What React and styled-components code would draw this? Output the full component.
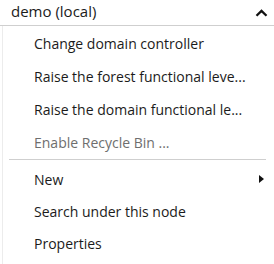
import React from "react";
import styled, { createGlobalStyle } from "styled-components";

const Global = createGlobalStyle`
  html, body { margin: 0; padding: 0; background: #fff; }
  body { font-family: "Open Sans", "Noto Sans", sans-serif; }
`;

const Page = styled.div`
  width: 274px;
  height: 264px;
  background: #fff;
  overflow: hidden;
`;

const Header = styled.div`
  height: 25px;
  border-bottom: 1px solid #cfcfcf;
  display: flex;
  align-items: center;
  justify-content: space-between;
  padding: 0 6px 0 11px;
  box-sizing: content-box;
`;

const Title = styled.span`
  font-size: 15px;
  color: #1b1b1b;
  line-height: 1;
  margin-top: -2px;
`;

const Menu = styled.div`
  margin-left: 2px;
  border-left: 1px solid #ececec;
  height: 238px;
  padding-top: 1px;
  box-sizing: border-box;
`;

const Group = styled.div`
  display: flex;
  flex-direction: column;
`;

const Item = styled.div`
  height: ${(p) => p.$h || 32}px;
  display: flex;
  align-items: center;
  justify-content: space-between;
  padding: 0 10px 0 31px;
  font-size: 14px;
  color: ${(p) => (p.$disabled ? "#6e6e6e" : "#1b1b1b")};
  white-space: nowrap;
`;

const Separator = styled.div`
  height: 1px;
  background: #cfcfcf;
  margin: 0 8px 3px 6px;
`;

const Caret = () => (
  <svg width="13" height="8" viewBox="0 0 13 8">
    <path d="M1.5 6.8 L6.5 1.9 L11.5 6.8" fill="none" stroke="#111" strokeWidth="2.3" />
  </svg>
);

const Arrow = () => (
  <svg width="5" height="8" viewBox="0 0 5 8">
    <path d="M0 0 L5 4 L0 8 Z" fill="#111" />
  </svg>
);

export default function App() {
  return (
    <Page>
      <Global />
      <Header>
        <Title>demo (local)</Title>
        <Caret />
      </Header>
      <Menu>
        <Group>
          <Item $h={33}>Change domain controller</Item>
          <Item $h={33}>Raise the forest functional leve...</Item>
          <Item $h={33}>Raise the domain functional le...</Item>
          <Item $h={33} $disabled>Enable Recycle Bin ...</Item>
        </Group>
        <Separator />
        <Group>
          <Item>
            New
            <Arrow />
          </Item>
          <Item>Search under this node</Item>
          <Item>Properties</Item>
        </Group>
      </Menu>
    </Page>
  );
}
